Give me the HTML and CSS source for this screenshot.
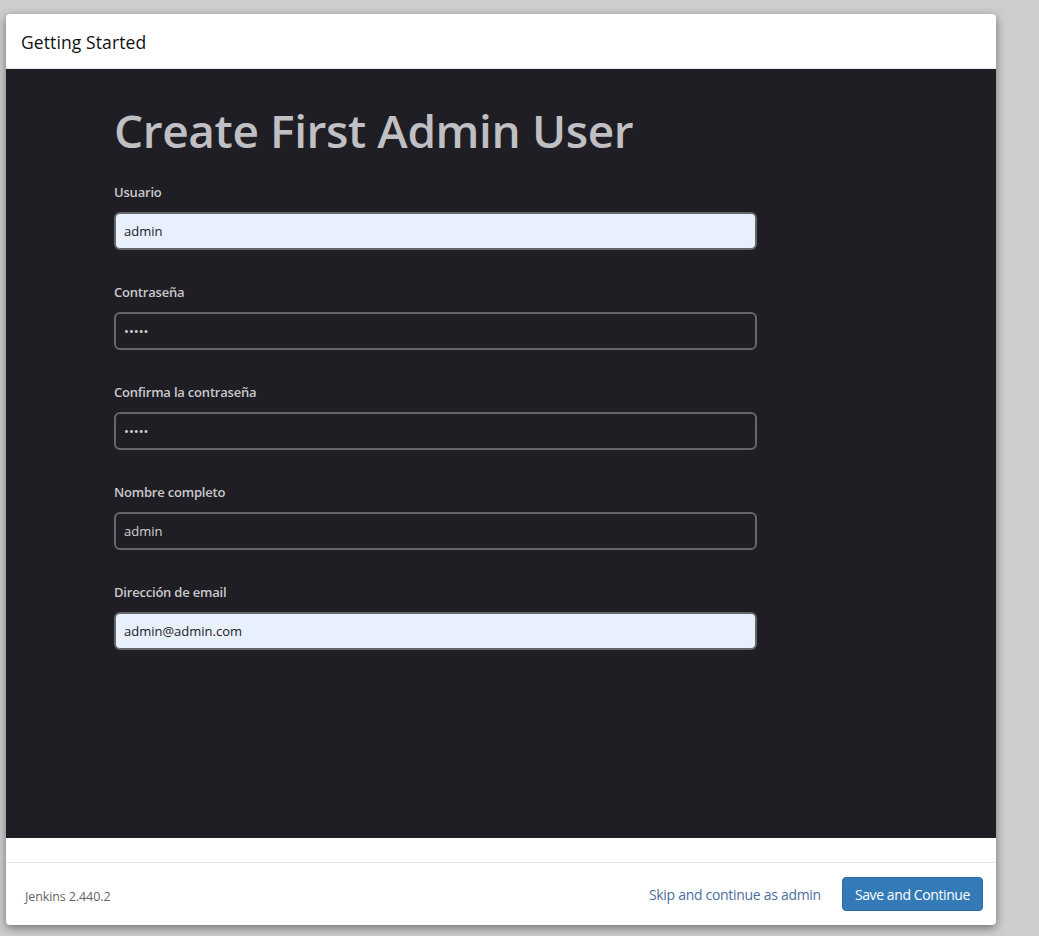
FILE: index.html
```html
<!DOCTYPE html>
<html lang="es">
<head>
<meta charset="utf-8">
<title>Getting Started</title>
<link rel="stylesheet" href="styles.css">
</head>
<body>
<div class="modal">
  <header class="modal-header">
    <h4 class="modal-title">Getting Started</h4>
  </header>
  <main class="modal-body">
    <h1 class="page-title">Create First Admin User</h1>
    <form class="form">
      <div class="field">
        <label class="label">Usuario</label>
        <input class="input filled" type="text" value="admin">
      </div>
      <div class="field">
        <label class="label">Contraseña</label>
        <input class="input" type="password" value="admin">
      </div>
      <div class="field">
        <label class="label">Confirma la contraseña</label>
        <input class="input" type="password" value="admin">
      </div>
      <div class="field">
        <label class="label">Nombre completo</label>
        <input class="input" type="text" value="admin">
      </div>
      <div class="field">
        <label class="label">Dirección de email</label>
        <input class="input filled" type="text" value="admin@admin.com">
      </div>
    </form>
  </main>
  <div class="spacer"></div>
  <footer class="modal-footer">
    <span class="version">Jenkins 2.440.2</span>
    <div class="actions">
      <a class="skip" href="#">Skip and continue as admin</a>
      <button class="btn-primary" type="button">Save and Continue</button>
    </div>
  </footer>
</div>
</body>
</html>
```
FILE: styles.css
```css
* { box-sizing: border-box; }
html, body {
  margin: 0;
  padding: 0;
  background: #cdcdcd;
  font-family: "Open Sans", "Noto Sans", sans-serif;
}
body {
  padding: 14px 0 0 6px;
  height: 936px;
}
.modal {
  width: 990px;
  height: 911px;
  background: #fff;
  border-radius: 4px;
  box-shadow: 0 3px 10px rgba(0,0,0,0.45);
  display: flex;
  flex-direction: column;
  overflow: hidden;
}
.modal-header {
  height: 55px;
  border-bottom: 1px solid #e5e5e5;
  display: flex;
  align-items: center;
  padding: 0 15px;
}
.modal-title {
  margin: 0;
  font-size: 17.5px;
  font-weight: 500;
  color: #111;
  padding-top: 1px;
  letter-spacing: 0.1px;
}
.modal-body {
  height: 769px;
  background: #1f1e24;
  padding: 33px 108px 0;
}
.page-title {
  margin: 0 0 25px;
  font-size: 46px;
  line-height: 56px;
  font-weight: 600;
  color: #c0bfc3;
  letter-spacing: -0.4px;
}
.form {
  display: flex;
  flex-direction: column;
  gap: 33px;
  width: 643px;
}
.field {
  display: flex;
  flex-direction: column;
  gap: 11px;
}
.label {
  font-size: 13px;
  line-height: 18px;
  font-weight: 600;
  color: #c9c9cc;
  letter-spacing: -0.2px;
}
.input {
  height: 38px;
  width: 100%;
  border: 2px solid #67666b;
  border-radius: 6px;
  background: #1f1e24;
  color: #d2d2d4;
  font-family: inherit;
  font-size: 13px;
  padding: 0 8px;
  outline: none;
}
.input.filled {
  background: #e8f0fe;
  color: #222;
}
.spacer {
  height: 25px;
  border-bottom: 1px solid #e5e5e5;
}
.modal-footer {
  flex: 1;
  display: flex;
  align-items: center;
  justify-content: space-between;
  padding: 0 13px 0 19px;
}
.version {
  font-size: 12.5px;
  color: #666;
  padding-top: 4px;
  letter-spacing: -0.1px;
}
.actions {
  display: flex;
  align-items: center;
  gap: 21px;
}
.skip {
  font-size: 14px;
  color: #4c6f9c;
  text-decoration: none;
  letter-spacing: -0.3px;
}
.btn-primary {
  height: 34px;
  padding: 0 12px;
  background: #337ab7;
  color: #fff;
  border: 1px solid #2e6da4;
  border-radius: 4px;
  font-family: inherit;
  font-size: 14px;
  letter-spacing: -0.4px;
}
```
